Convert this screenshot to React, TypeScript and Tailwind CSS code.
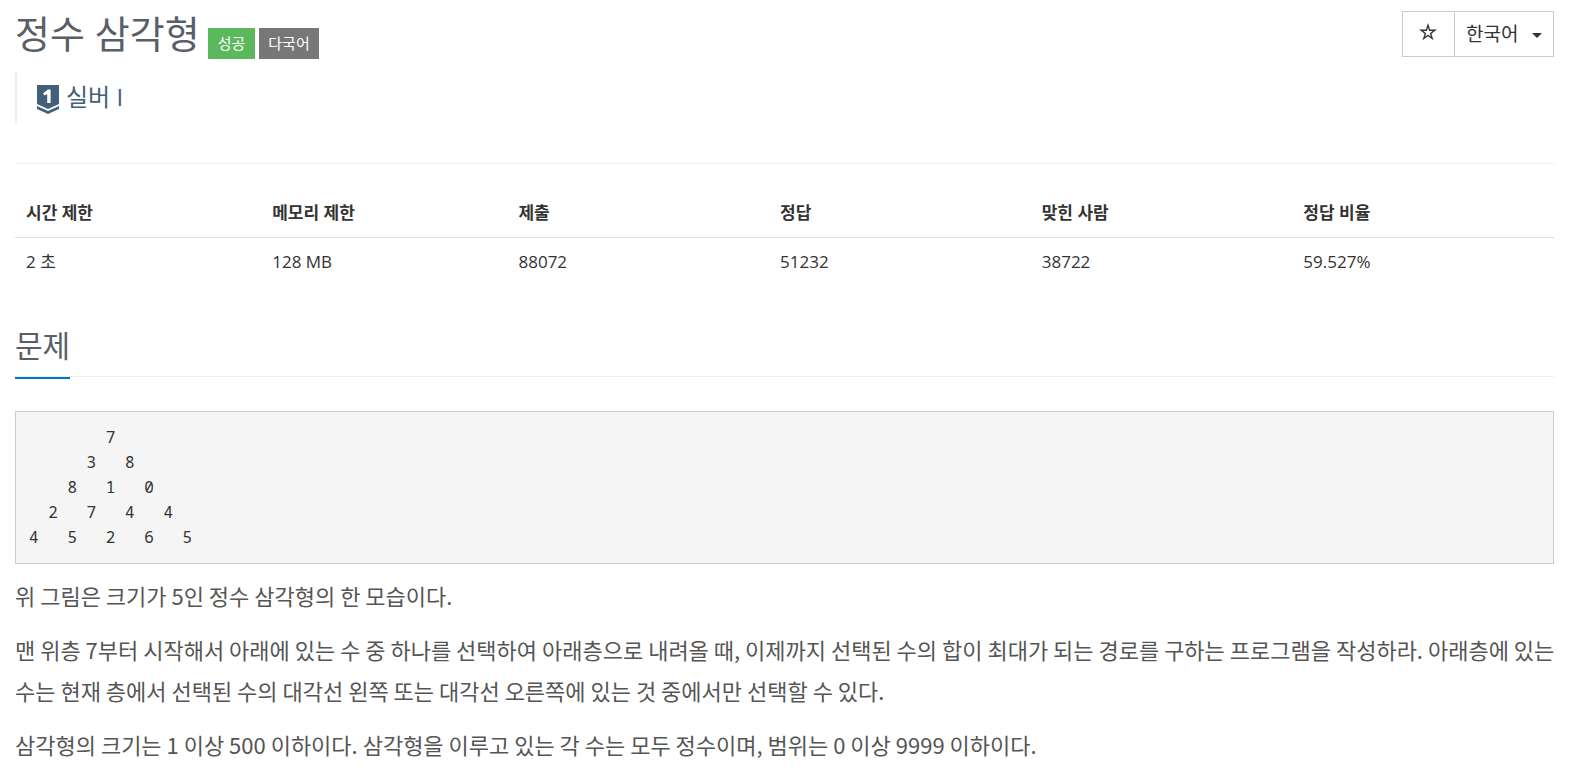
interface Column {
  label: string
  value: string
  width: string
}

const columns: Column[] = [
  { label: "시간 제한", value: "2 초", width: "w-[16%]" },
  { label: "메모리 제한", value: "128 MB", width: "w-[16%]" },
  { label: "제출", value: "88072", width: "w-[17%]" },
  { label: "정답", value: "51232", width: "w-[17%]" },
  { label: "맞힌 사람", value: "38722", width: "w-[17%]" },
  { label: "정답 비율", value: "59.527%", width: "w-[17%]" },
]

const triangle = `        7
      3   8
    8   1   0
  2   7   4   4
4   5   2   6   5`

const paragraphs = [
  "위 그림은 크기가 5인 정수 삼각형의 한 모습이다.",
  "맨 위층 7부터 시작해서 아래에 있는 수 중 하나를 선택하여 아래층으로 내려올 때, 이제까지 선택된 수의 합이 최대가 되는 경로를 구하는 프로그램을 작성하라. 아래층에 있는 수는 현재 층에서 선택된 수의 대각선 왼쪽 또는 대각선 오른쪽에 있는 것 중에서만 선택할 수 있다.",
  "삼각형의 크기는 1 이상 500 이하이다. 삼각형을 이루고 있는 각 수는 모두 정수이며, 범위는 0 이상 9999 이하이다.",
]

function TierBadge() {
  return (
    <svg viewBox="0 0 22 29" className="mt-1 h-[29px] w-[22px]" aria-hidden="true">
      <path d="M0 0H22V19L11 24L0 19Z" fill="#435f7a" />
      <path d="M0 21L11 26L22 21V24L11 29L0 24Z" fill="#435f7a" />
      <path d="M13.6 18H10.2V8.9L7.6 10.6L6 8.5L10.8 4.4H13.6Z" fill="#fff" />
    </svg>
  )
}

function Toolbar() {
  return (
    <div className="flex h-[46px] border border-[#ccc] text-[#333]">
      <button type="button" aria-label="즐겨찾기" className="flex w-[52px] items-center justify-center border-r border-[#ccc]">
        <svg viewBox="0 0 18 18" className="mr-px mb-1 h-[18px] w-[18px]" aria-hidden="true">
          <path
            d="M9 0L11.1 6.6H18L12.4 10.7L14.5 17.3L9 13.2L3.5 17.3L5.6 10.7L0 6.6H6.9ZM9 4.4L7.9 8H4.2L7.2 10.2L6.1 13.7L9 11.5L11.9 13.7L10.8 10.2L13.8 8H10.1Z"
            fill="currentColor"
            fillRule="evenodd"
          />
        </svg>
      </button>
      <button type="button" className="flex w-[98px] items-center justify-between px-[11px] text-[19px]">
        한국어
        <svg viewBox="0 0 10 5" className="mt-[3px] h-[5px] w-[10px]" aria-hidden="true">
          <path d="M0 0H10L5 5Z" fill="currentColor" />
        </svg>
      </button>
    </div>
  )
}

export default function App() {
  return (
    <main className="pt-[11px] pr-4 pl-[15px] font-['Open_Sans','Noto_Sans_CJK_KR',sans-serif] text-[17px] text-[#333]">
      <header className="flex items-start justify-between">
        <div className="flex items-end">
          <h1 className="pb-1 text-[38px] leading-[44px] text-[#585f69]">정수 삼각형</h1>
          <div className="ml-2 flex gap-1 text-[15px] leading-[31px] text-white">
            <span className="bg-[#5cb85c] px-[10px]">성공</span>
            <span className="bg-[#777] px-[9px]">다국어</span>
          </div>
        </div>
        <Toolbar />
      </header>

      <blockquote className="mt-[13px] flex h-[51px] items-center border-l-2 border-[#eee] pl-5 text-2xl text-[#435f7a]">
        <TierBadge />
        <span className="mb-[2px] ml-[7px]">실버 I</span>
      </blockquote>

      <hr className="mt-10 border-[#eee]" />

      <table className="mt-[25px] w-full table-fixed text-left">
        <thead>
          <tr className="border-b border-[#ddd]">
            {columns.map((col) => (
              <th key={col.label} scope="col" className={`${col.width} h-[48px] px-[11px] font-bold`}>
                {col.label}
              </th>
            ))}
          </tr>
        </thead>
        <tbody>
          <tr>
            {columns.map((col) => (
              <td key={col.label} className="h-[48px] px-[11px]">
                {col.value}
              </td>
            ))}
          </tr>
        </tbody>
      </table>

      <section>
        <div className="mt-[38px] flex border-b border-dotted border-[#ddd]">
          <h2 className="-mb-[3px] border-b-2 border-[#0076bd] pb-2 text-[30px] leading-[46px] text-[#585f69]">문제</h2>
        </div>

        <pre className="mt-[34px] border border-[#ccc] bg-[#f5f5f5] px-[13px] py-[13px] font-['Noto_Sans_Mono','DejaVu_Sans_Mono',monospace] text-[16px] leading-[25px]">
          {triangle}
        </pre>

        <div className="mt-[11px] -mr-1 space-y-[13px] font-['Noto_Sans_CJK_KR',sans-serif] text-[22px] leading-[41px] break-keep text-[#555]">
          {paragraphs.map((text) => (
            <p key={text}>{text}</p>
          ))}
        </div>
      </section>
    </main>
  )
}
